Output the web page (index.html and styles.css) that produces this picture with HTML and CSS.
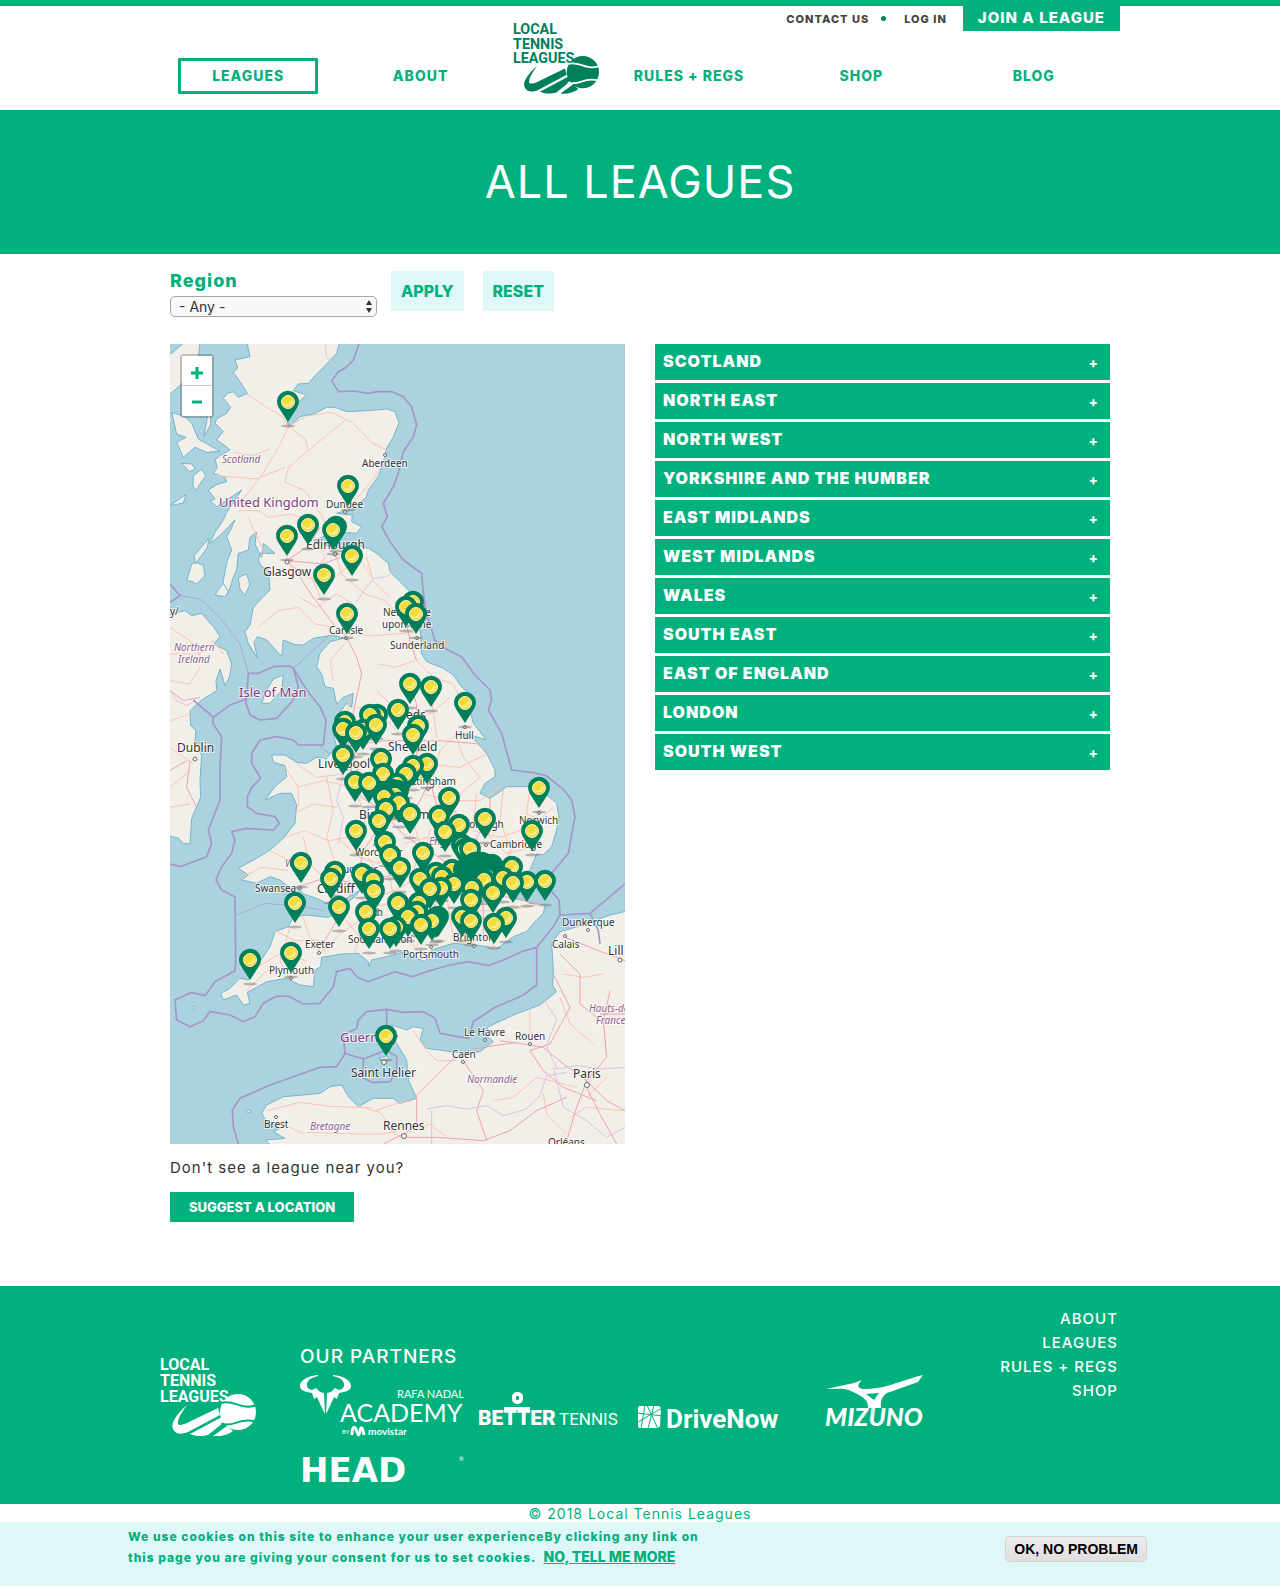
FILE: index.html
```html
<!DOCTYPE html>
<html lang="en">
<head>
<meta charset="utf-8">
<meta name="viewport" content="width=device-width, initial-scale=1">
<title>All Leagues | Local Tennis Leagues</title>
<link rel="stylesheet" href="styles.css">
</head>
<body>
<header class="header">
  <div class="wrap">
    <div class="top-links">
      <a href="#">Contact us</a>
      <span class="dot"></span>
      <a href="#">Log in</a>
      <a class="join" href="#">Join a league</a>
    </div>
    <nav class="nav">
      <a class="active" href="#">Leagues</a>
      <a href="#">About</a>
      <a class="logo" href="#" aria-label="Local Tennis Leagues">
        <svg viewBox="0 0 96 81">
          <g class="logo-words"><text x="0" y="15">LOCAL</text><text x="0" y="31">TENNIS</text><text x="0" y="47">LEAGUES</text></g>
          <use href="#swoosh"/>
        </svg>
      </a>
      <a href="#">Rules + Regs</a>
      <a href="#">Shop</a>
      <a href="#">Blog</a>
    </nav>
  </div>
</header>

<section class="hero"><h1>All Leagues</h1></section>

<main class="main">
  <form class="filters">
    <div class="field">
      <label for="region">Region</label>
      <div class="select">
        <select id="region"><option>- Any -</option><option>Scotland</option><option>North East</option><option>London</option></select>
        <svg viewBox="0 0 6 13"><path d="M0 5 3 0l3 5zM0 8l3 5 3-5z"/></svg>
      </div>
    </div>
    <button type="button">Apply</button>
    <button type="reset">Reset</button>
  </form>

  <div class="columns">
    <div>
      <div class="map">
        <svg class="map-art" viewBox="0 0 455 800" role="img" aria-label="Map of leagues">
          <defs>
            <g id="swoosh">
              <path d="M27 50C18 58 10 68 13 74c2 5 8 6 15 3l32-17-2-7-31 15c-5 2-9 3-9 0 0-5 4-11 9-18zM30 79c7 3 14 2 18 1l15-12-1-6zM53 81c7 1 15-1 20-5l-6-5z"/>
              <circle cx="78" cy="57" r="18"/>
              <path class="seam" d="M61 48c14-4 19 8 36 2M61 69c16 3 15-6 33-3"/>
            </g>
            <g id="pin-base">
              <ellipse class="pin-shadow" cy="24" rx="7" ry="1.5"/>
              <path class="pin-body" d="M0 20L-9 6A11 11 0 1 1 9 6z"/>
            </g>
            <g id="pin">
              <use href="#pin-base"/>
              <circle class="pin-ball" r="6.5"/>
              <path class="pin-seam" d="M-4.500 1.500C-3 5 3 4 3.500-2M-1 3.500c3 1 5-1 5.500-4"/>
            </g>
          </defs>
          <rect class="sea" width="455" height="800"/>
          <g transform="scale(.333333)">
            <g class="land">
              <path d="M230 -10L240 38 195 48 203 72 190 85 200 98 232 148 205 160 190 143 172 148 160 163 182 190 170 208 140 225 135 238 160 262 140 288 165 305 180 318 150 335 135 348 142 370 130 388 165 400 170 413 140 422 115 438 135 465 120 470 140 488 190 455 215 438 170 505 160 528 135 565 120 598 150 575 195 528 182 558 170 578 185 618 172 650 160 708 153 758 175 748 190 700 200 678 205 628 235 618 240 580 260 565 255 600 275 640 280 598 315 628 270 628 265 648 275 668 295 678 300 738 280 758 250 790 240 843 225 863 235 898 262 942 252 895 262 878 290 888 335 938 340 888 375 902 400 903 430 883 490 873 520 883 480 893 450 928 440 968 455 990 465 1028 490 1033 500 1080 520 1060 550 1048 545 1090 530 1078 500 1118 515 1150 490 1168 500 1208 470 1243 440 1240 410 1258 380 1255 345 1233 305 1233 310 1255 345 1265 350 1298 315 1328 285 1368 330 1348 365 1348 380 1383 375 1438 340 1483 300 1518 260 1543 205 1573 235 1593 215 1608 260 1618 300 1598 330 1608 360 1633 385 1633 400 1650 440 1663 470 1678 530 1663 570 1638 560 1653 530 1678 515 1710 470 1720 410 1713 370 1720 355 1748 315 1763 300 1808 260 1868 235 1908 210 1903 180 1933 152 1948 160 1968 200 1953 220 1983 240 1978 232 1945 290 1913 350 1903 390 1923 430 1928 435 1878 452 1868 455 1840 515 1830 565 1828 595 1853 597 1868 605 1848 650 1838 700 1825 730 1838 765 1853 785 1818 850 1798 910 1803 955 1808 975 1818 1030 1778 1070 1763 1090 1738 1120 1708 1125 1683 1080 1678 1060 1665 1020 1663 1010 1628 1045 1608 1080 1578 1100 1530 1120 1532 1145 1508 1160 1458 1167 1418 1160 1378 1120 1343 1080 1328 1010 1328 990 1343 960 1363 930 1348 945 1318 975 1298 975 1278 950 1228 915 1188 870 1168 920 1178 948 1188 930 1163 910 1138 898 1090 890 1043 870 1023 850 993 820 973 770 953 755 930 752 870 740 800 735 768 715 738 690 713 660 683 655 658 620 628 595 613 545 600 520 612 470 605 430 590 480 570 530 566 560 568 575 548 545 533 547 513 500 508 550 493 590 458 595 438 625 398 642 348 650 313 670 278 687 238 675 203 650 195 590 200 530 203 495 190 470 190 435 208 390 218 355 250 350 210 378 180 410 153 370 140 385 120 415 118 440 90 468 62 500 28 510 -10z"/>
              <path d="M-10 40L50 -10 90 -10 85 50 45 85 35 120 -10 160z"/>
              <path d="M5 205L45 218 65 238 85 285 150 322 110 325 75 310 40 340 20 295 48 280 20 270z"/>
              <path d="M35 358l30 2 12 15-18 8zM70 395l25-20 12 20-30 45-8-15zM0 485l48-34-8 26zM72 635l45-52-5 28-35 48zM50 710l15-50 15-5 20 10 5 30-25 25-15-8zM205 700l25-10 10 30-15 35-15-20zM112 218l10-20 0 45-20 35z"/>
              <path d="M150 730l10-12 15 25-10 15-30-5z"/>
              <path d="M-10 812L45 800 65 815 95 808 130 848 150 878 132 900 170 920 185 960 178 1000 165 1025 150 975 138 1010 140 1040 95 1068 60 1100 62 1145 78 1160 75 1188 95 1235 90 1310 92 1360 65 1423 60 1500 40 1498 25 1482 -10 1475z"/>
              <path d="M275 1078L285 1048 310 1005 340 993 335 1038 300 1078z"/>
              <path d="M1375 1700L1320 1713 1240 1743 1170 1763 1145 1798 1150 1880 1148 1925 1160 1943 1110 1983 1030 2013 955 2048 945 2073 970 2093 930 2123 880 2128 770 2113 750 2088 760 2053 730 2048 710 2058 665 2043 680 2098 710 2148 715 2208 740 2263 690 2278 670 2263 610 2263 565 2288 535 2258 515 2223 480 2228 450 2248 400 2253 340 2258 290 2283 275 2308 290 2333 340 2348 310 2363 345 2383 285 2388 310 2410 1375 2410z"/>
              <path d="M625 2142l25-5 10 10-20 5zM228 2300l10-2 6 5-10 4zM65 1990l6-4 4 8-8 3z"/>
            </g>
            <g class="road">
              <path d="M465 0l5 40 30 30M230 150l60 40 50 30 15 30-30 60-50 85-60 75M355 245l60-30 70-10 60 30 60 60 45 25M355 245l50 40 10 35 60-50 50-40M415 320l-60 50-10 45 60 25 40 60 30 50M345 370l-85 35-120-10M190 325l60 10 50-20M645 340l-30 60-60 70-40 30M205 500l60 0 30 20 70-10 60 25M235 520l50 110M350 640l40 50 45 20 60-10 70-60 40 60M435 590l30 50-40 60 30 70M495 630l20 60 70 60 60 20 60 70M590 640l20 70 50 50"/>
              <path d="M265 850l60-50 60-10 50 50 60 10M390 760l50 30 60-40 50 30M520 870l100 5 110-10M625 960l50 10 60-20M540 880l-60 70 10 60M700 770l30 100M740 950l50 50 60 20 30 60M620 1040l60 60 100 10 60-50M770 1000l20 100 10 80M560 1090l60 10 60 60M540 1060l-10 60 20 60M870 1160l-60 60-20 80M950 1230l-80 40-100-10M860 1180l20 60 50 60-60 50M380 1260l60 40 80-10M345 1270l40 60 0 60M370 1410l60-30 70 10M380 1330l80-20 90 20M345 1480l60-20 70 30 60-10M470 1300l20 100-20 80 30 90M400 1480l20 80 60 60M300 1520l60 30 40 60M215 1600l60-30 80 10M500 1480l70 60 60 20M550 1320l30 80 90 20M590 1400l-20 100 60 100"/>
              <path d="M760 1350l80 20 90 0 60-40M800 1310l40 80 70 70 80 20 90-30 70-60M920 1350l-10 90-40 60M1000 1335l-10 90 30 90-10 80M1080 1330l-10 80 70 30M860 1400l-80 60-20 80M700 1500l70-20 100 20 120 50M620 1550l80 40 110-20M720 1400l30 100-20 90M780 1400l50 100M930 1450l80 80 70-20M1010 1530l80-60M570 1640l80 10 80-40 80 30M560 1700l90-20 90 30 80-10 100 50M660 1600l20 120 60 100M780 1600l0 100-40 110M830 1650l20 140M900 1640l10 160M1000 1650l-40 70 10 90M900 1700l100 0 120-20M520 1720l50 60-20 50M400 1720l20 60 50 50M315 1760l60 30 70 0M260 1870l70-40 80 20M360 1750l-30 100 30 60M230 1940l60-60 80-10M450 1830l60-60 60-40"/>
              <path d="M0 930l90 0 40-40 30 40M0 850l60 40 40 60M0 1010l60 10 30-50M0 1130l60-20M0 1210l70 50M0 1330l60-50M0 1390l60-10"/>
              <path d="M290 2300l100-25 90 12 130 5M560 2285l70 20 40 60 30 20M615 2300l60-20 50-10M690 2360l-50 10-80 0-150-5M340 2340l60 30M730 2060l40 60 30 30 60 0M830 2380l-50-40-80 30M1080 2000l0 90M970 2270l60-10 70-60 120 30M1120 2250l10 60 60 60M1170 1960l30 80 70 60M1180 1890l60 10 60-10M1250 2260l60-60M1200 2320l50-30 110 10"/>
            </g>
            <g class="motorway">
              <path d="M350 650l60-40 40-60M350 650l110 10 50-20M350 650l40 50 40 60 60 80 40 40 30 60 15 50-20 90-20 120 10 90M550 1250l10-50 90-10 90 0 70 0 120 10M710 1000l30 80-5 100 10 80 30 60-30 60-80 40-90-60 -30-60-10-80M650 1420l60 60 80 50 80 50M550 1250l30 70 80 60M640 1430l-60 90-20 90-30 60-30 60-60 100M770 1260l20 90 30 90 60 80 20 40M910 1560l10-80 40-60 0-60M550 1610l150-20 120-10 70 0M380 1630l90-30 90 20M880 1580l-70 80-60 90-30 30M930 1620l10 80 0 80M930 1600l80 60 100 20M740 950l-20-60-10-50"/>
              <path d="M1170 1830l60 60 0 90 50 40 80-30M1365 1850l-80-30-100-40M1150 1890l50 100-60 110-60 20 40 60 60 50 100 40M1290 2010l75 0M990 2090l70 10 60 10 60 50 70 50M1250 2210l-30 80-30 100M1250 2210l60-70-10-110 20-90M1250 2210l60 60 55 30M1250 2230l40 80 50 90M850 2145l-60 60-50 50 0 80-30 30M850 2145l60-30 130-20M880 2150l60 90-20 60 30 90M710 2380l90 0 140 10 80-30 80-60 90-40M700 2370l-60 30M0 1040l40 30 50-10M60 1250l-10 80 30 60M0 1280l50-30"/>
            </g>
            <g class="region">
              <path d="M700 648l-50 50-40 5-30 40-20 30M510 1210l10 80-20 80 20 50-15 80M1120 1965l40 60-30 80 30 70 60-10 80 10 65-5M770 2295l60-10 60 10 60-10 50 30 70-20 40-40 20-60 60-10M785 2300l0 100M1150 2170l30 120 70 40 60 50 55-30M0 1040l20 30 30 15 25-15"/>
            </g>
            <g class="boundary">
              <path d="M567 0L550 48 525 73 505 83 485 110 505 143 550 141 595 148 620 143 667 143 700 158 725 188 740 243 730 278 700 323 685 388 670 428 640 478 652 518 635 548 660 593 700 648 755 688 760 748 768 800 795 890 830 916 875 938 915 993 960 1038 965 1068 955 1098 995 1168 1025 1278 1090 1286 1130 1296 1180 1336 1205 1368 1215 1418 1195 1528 1145 1588 1145 1643 1167 1668 1170 1713 1150 1748 1100 1810 1055 1823 1000 1848 955 1865 895 1853 840 1863 770 1883 725 1898 675 1883 635 1898 595 1913 560 1898 540 1873 500 1883 490 1928 450 1978 400 1980 355 1956 315 1958 280 1978 255 2018 220 2033 180 2013 120 2003 100 2030 60 2048 20 2028 15 1968 65 1945 105 1955 135 1913 195 1880 197 1850 195 1658 155 1638 138 1608 155 1568 185 1528 195 1488 185 1463 230 1453 310 1458 328 1438 315 1418 260 1408 232 1388 232 1358 245 1330 272 1303 245 1258 245 1228 270 1188 320 1178 370 1188 385 1203 460 1203 468 1128 450 1088 410 1038 370 973 360 966 310 968 265 988 235 988 228 1078 240 1113 270 1128 320 1123 370 1068 385 1028 370 973M228 1065L180 1083 130 1120 128 1138 155 1178 150 1278 150 1368 115 1458 125 1498 110 1538 30 1568 0 1560M70 1068L130 1120M1170 1713L1260 1708 1365 1620M1260 1708L1285 1760 1290 1800M1100 1808L1100 1923 1060 1953 970 1993 910 2033 895 2083 810 2068 795 2023 760 2003 700 2005 650 1996 590 2003 565 2028 560 2053 520 2073 525 2128 580 2145 650 2118 650 1996M525 2128L500 2168 450 2170 370 2198 300 2223 210 2263 187 2298 190 2348 205 2400M580 2145L580 2203 610 2216 660 2213 680 2178 680 2138 650 2118M0 720L30 755 0 775"/>
            </g>
            <path class="boundary thin" d="M30 755L90 765 150 820 210 900 235 988M370 973L480 873M195 1715L285 1678 400 1688 460 1700M450 1208L480 1230"/>
          </g>
          <g class="place">
            <circle cx="215" cy="111" r="1.500"/><circle cx="175" cy="168" r="1.500"/><circle cx="165" cy="210" r="2"/><circle cx="117" cy="218" r="2"/><circle cx="176" cy="294" r="1.500"/><circle cx="247" cy="294" r="1.500"/><circle cx="25" cy="415" r="2"/><circle cx="295" cy="383" r="1.500"/><circle cx="258" cy="445" r="1.500"/><circle cx="369" cy="469" r="1.500"/><circle cx="316" cy="501" r="1.500"/><circle cx="130" cy="544" r="1.500"/><circle cx="149" cy="609" r="1.500"/><circle cx="121" cy="634" r="1.500"/><circle cx="261" cy="603" r="1.500"/><circle cx="304" cy="602" r="1.500"/><circle cx="418" cy="586" r="1.500"/><circle cx="395" cy="592" r="1.500"/><circle cx="450" cy="616" r="2"/><circle cx="214" cy="718" r="2.500"/><circle cx="315" cy="696" r="1.500"/><circle cx="360" cy="700" r="1.500"/><circle cx="293" cy="718" r="1.500"/><circle cx="417" cy="741" r="2.500"/><circle cx="106" cy="773" r="1.500"/><circle cx="234" cy="792" r="2.500"/>
          </g>
          <g class="town">
            <text x="192" y="123">Aberdeen</text><text x="156" y="164">Dundee</text><text x="159" y="290">Carlisle</text><text x="213" y="272">Newcastle</text><text x="212" y="284">upon Tyne</text><text x="220" y="305">Sunderland</text><text x="285" y="395">Hull</text><text x="229" y="441">Nottingham</text><text x="268" y="484">Peterborough</text><text x="349" y="480">Norwich</text><text x="320" y="504">Cambridge</text><text x="185" y="512">Worcester</text><text x="157" y="529">Gloucester</text><text x="85" y="548">Swansea</text><text x="191" y="572">Bath</text><text x="178" y="599">Southampton</text><text x="283" y="597">Brighton</text><text x="135" y="604">Exeter</text><text x="233" y="614">Portsmouth</text><text x="99" y="630">Plymouth</text><text x="392" y="582">Dunkerque</text><text x="382" y="604">Calais</text><text x="294" y="692">Le Havre</text><text x="345" y="696">Rouen</text><text x="282" y="714">Caen</text><text x="94" y="784">Brest</text><text x="378" y="802">Orléans</text><text x="0" y="271">y/</text>
          </g>
          <g class="city">
            <text x="136" y="205">Edinburgh</text><text x="93" y="232">Glasgow</text><text x="223" y="375">Leeds</text><text x="218" y="407">Sheffield</text><text x="148" y="424">Liverpool</text><text x="7" y="408">Dublin</text><text x="189" y="475">Birmingham</text><text x="147" y="549">Cardiff</text><text x="438" y="611">Lill</text><text x="181" y="733">Saint Helier</text><text x="403" y="734">Paris</text><text x="213" y="786">Rennes</text>
          </g>
          <g class="area">
            <text x="52" y="119">Scotland</text><text x="4" y="307">Northern</text><text x="8" y="319">Ireland</text><text x="115" y="523">Wales</text><text x="259" y="501">England</text><text x="419" y="668">Hauts-de</text><text x="426" y="680">France</text><text x="297" y="739">Normandie</text><text x="140" y="786">Bretagne</text>
          </g>
          <g class="country">
            <text x="49" y="163">United Kingdom</text><text x="69" y="353">Isle of Man</text><text x="170" y="698">Guernsey</text>
          </g>
          <g id="pins"></g>
        </svg>
        <div class="zoom">
          <button type="button" aria-label="Zoom in"><svg viewBox="0 0 12 12"><path d="M6 0v12M0 6h12"/></svg></button>
          <button type="button" aria-label="Zoom out"><svg viewBox="0 0 12 12"><path d="M1 6h10"/></svg></button>
        </div>
      </div>
      <p class="prompt">Don't see a league near you?</p>
      <a class="suggest" href="#">Suggest a location</a>
    </div>

    <div class="accordion">
      <button type="button">Scotland<span>+</span></button>
      <button type="button">North East<span>+</span></button>
      <button type="button">North West<span>+</span></button>
      <button type="button">Yorkshire and the Humber<span>+</span></button>
      <button type="button">East Midlands<span>+</span></button>
      <button type="button">West Midlands<span>+</span></button>
      <button type="button">Wales<span>+</span></button>
      <button type="button">South East<span>+</span></button>
      <button type="button">East of England<span>+</span></button>
      <button type="button">London<span>+</span></button>
      <button type="button">South West<span>+</span></button>
    </div>
  </div>
</main>

<footer class="footer">
  <div class="wrap footer-row">
    <a class="footer-logo" href="#" aria-label="Local Tennis Leagues">
      <svg viewBox="0 0 96 81">
        <g class="logo-words"><text x="0" y="15">LOCAL</text><text x="0" y="31">TENNIS</text><text x="0" y="47">LEAGUES</text></g>
        <use href="#swoosh"/>
      </svg>
    </a>
    <section class="partners">
      <h2>Our Partners</h2>
      <div class="partner-grid">
        <svg viewBox="0 0 164 64" role="img" aria-label="Rafa Nadal Academy by Movistar">
          <path d="M18 1C8 2 0 6 0 12c0 4 5 6 12 7l2 6 3-2 4 9 4 8-1-21-4-1-4-4-4 2C7 15 5 11 9 6c2-2 5-3 9-4zM33 1c10 1 18 5 18 11 0 4-5 6-12 7l-2 6-3-2-4 9-4 8 1-21 4-1 4-4 4 2c5-1 7-5 3-10-2-2-5-3-9-4z"/>
          <text class="rafa" x="97" y="24">RAFA NADAL</text>
          <text class="academy" x="40" y="48">ACADEMY</text>
          <text class="by" x="42" y="60">BY</text>
          <path class="stroke" d="M52 61c0-9 3-10 5-3 2 5 2 3 3-1 1-6 3-3 4 4"/>
          <text class="movistar" x="68" y="61">movistar</text>
        </svg>
        <svg viewBox="0 0 164 64" role="img" aria-label="Better Tennis">
          <rect class="ring" x="46" y="20" width="7" height="8" rx="3"/>
          <path d="M36 33h26v3H36z"/>
          <text class="better" x="10" y="51">BETTER</text><text class="tennis" x="91" y="51">TENNIS</text>
        </svg>
        <svg viewBox="0 0 164 64" role="img" aria-label="DriveNow">
          <path d="M3 32h20l2 2-1 18-2 2H3l-1-2V34z"/>
          <path class="cut" d="M1 39l26 3M2 48l24-14M9 31l-4 24M11 31l11 24M18 31L12 55"/>
          <text class="drive" x="30" y="54">DriveNow</text>
        </svg>
        <svg viewBox="0 0 164 64" role="img" aria-label="Mizuno">
          <path d="M22 15L50 9l8-3c-4 4-6 8 1 9 23 0 33-7 60-14l-5 7-31 11c-5 3-7 8-6 15H64c1-10-9-13-19-18-7-2-15-1-23-1z"/>
          <path class="hole" d="M62 20l8 6 5-7z"/>
          <text class="mizuno" x="21" y="52">MIZUNO</text>
        </svg>
        <svg viewBox="0 0 164 32" role="img" aria-label="Head">
          <text class="head" x="0" y="28">HEAD</text><text class="by" x="159" y="7">®</text>
        </svg>
      </div>
    </section>
    <nav class="footer-nav">
      <a href="#">About</a><a href="#">Leagues</a><a href="#">Rules + Regs</a><a href="#">Shop</a>
    </nav>
  </div>
</footer>
<p class="copyright">© 2018 Local Tennis Leagues</p>

<aside class="cookies">
  <div class="cookie-row">
    <p>We use cookies on this site to enhance your user experienceBy clicking any link on this page you are giving your consent for us to set cookies. <a href="#">No, tell me more</a></p>
    <button type="button">OK, NO PROBLEM</button>
  </div>
</aside>
<script src="map.js"></script>
</body>
</html>
```
FILE: map.js
```js
// League locations in map units, drawn in order. A third value of 1 marks a plain pin.
const leagues = [
  [118,58],[178,142],[138,181],[117,192],[166,183,1],[163,186],[182,212],[154,231],[243,258],[236,263],[246,270],[177,270],
  [240,340],[261,343],[295,359],[228,366],[207,371],[200,371],[175,378],[173,385],[193,386],[206,381],[186,389],[248,382],[243,391],
  [211,415],[173,411],[257,420],[243,422],[236,430],[213,430],[185,438],[199,439],[227,440],[222,446,1],[228,447,1],[225,451],[214,453],
  [279,454],[229,459],[216,465],[240,470],[209,477],[269,472],[315,475],[369,444],[289,481],[275,488],[362,487],[186,487],
  [215,498],[220,511],[230,524],[253,509],[292,501],[295,505],[300,505],[131,519],[165,528],[161,535],
  [342,523],[282,526],[266,529],[272,533],[322,521,1],[318,521,1],[312,519,1],[305,519,1],[299,522,1],[294,526,1],[303,528,1],[310,526,1],
  [318,533],[314,536],[333,534],[250,535],[284,540],[271,544],[260,545],[302,544],[375,537],[357,538],[343,539],[323,549],[301,556],
  [192,530],[203,536],[204,547],[125,559],[169,563],[228,559],[249,559],[247,568],[238,573],[196,568],[268,573,1],[266,574,1],[262,577],
  [251,581],[226,583],[220,585],[199,585],[292,573],[301,577],[336,574],[324,580],[80,616],[121,609],[216,692]
];

const layer = document.getElementById("pins");
for (const [x, y, plain] of leagues) {
  const pin = document.createElementNS("http://www.w3.org/2000/svg", "use");
  pin.setAttribute("href", plain ? "#pin-base" : "#pin");
  pin.setAttribute("x", x);
  pin.setAttribute("y", y);
  layer.append(pin);
}
```
FILE: styles.css
```css
:root {
  --green: #00b07d;
  --dark: #007f5b;
  --mint: #e0f7f8;
}
* { box-sizing: border-box; }
body {
  margin: 0;
  background: #fff;
  color: #333;
  font-family: Inter, "Open Sans", sans-serif;
  font-size: 14px;
  letter-spacing: 1px;
}
a { color: inherit; text-decoration: none; }
button { font-family: inherit; cursor: pointer; }
p, h1, h2 { margin: 0; }
svg { display: block; }
.wrap { max-width: 960px; margin: 0 auto; }

.header { border-top: 6px solid var(--green); height: 110px; }
.top-links {
  display: flex;
  justify-content: flex-end;
  height: 25px;
  color: #444;
  font-size: 11px;
  font-weight: 800;
  line-height: 26px;
  text-transform: uppercase;
}
.dot {
  width: 5px;
  height: 5px;
  margin: 10px 18px 0 12px;
  border-radius: 50%;
  background: var(--dark);
}
.join {
  margin-left: 16px;
  padding: 0 15px;
  background: var(--green);
  color: #fff;
  font-size: 15px;
  font-weight: 800;
  line-height: 24px;
}
.nav {
  --gap: #fff;
  display: grid;
  grid-template-columns: 1fr 1fr 96px 1fr 1fr 1fr;
  align-items: end;
  height: 73px;
  margin-top: -10px;
  padding-left: 2px;
  color: var(--green);
  font-weight: 800;
  line-height: 30px;
  text-align: center;
  text-transform: uppercase;
}
.nav a { padding-bottom: 3px; }
.nav .active { margin: 0 16px; padding: 0; border: 3px solid var(--green); }
.nav .logo { width: 86px; margin-left: 6px; padding: 0; fill: var(--dark); }
.logo-words {
  font-family: Roboto, sans-serif;
  font-size: 16px;
  font-weight: 700;
  letter-spacing: 0;
}
.seam { fill: none; stroke: var(--gap); stroke-width: 2; }

.hero { padding: 44px 0; background: var(--green); color: #fff; text-align: center; }
.hero h1 { font-size: 45px; font-weight: 400; line-height: 56px; text-transform: uppercase; }

.main { max-width: 940px; margin: 0 auto; padding: 17px 0 64px; }
.filters { display: flex; align-items: flex-start; height: 73px; color: var(--green); }
.field { width: 207px; margin-right: 14px; }
.field label { display: block; font-size: 18px; font-weight: 800; line-height: 20px; margin-bottom: 5px; }
.select { position: relative; }
.select select {
  display: block;
  width: 100%;
  height: 21px;
  padding: 0 8px;
  border: 1px solid #a6a6a6;
  border-radius: 5px;
  background: #f8f8f8;
  color: #333;
  font: 14px/18px Inter, sans-serif;
  appearance: none;
}
.select svg { position: absolute; top: 4px; right: 5px; width: 6px; height: 13px; fill: #333; }
.filters button {
  height: 40px;
  margin-right: 19px;
  padding: 0 10px;
  border: 0;
  background: var(--mint);
  color: var(--green);
  font-size: 16px;
  font-weight: 800;
  text-transform: uppercase;
}

.columns { display: grid; grid-template-columns: 1fr 1fr; gap: 30px; align-items: start; }
.map { position: relative; overflow: hidden; }
.map-art { width: 100%; height: auto; }
.sea { fill: #aad3df; }
.land path { fill: #f2efe9; stroke: #72b5cc; stroke-width: 3; stroke-linejoin: round; }
.road, .motorway, .region, .boundary { fill: none; stroke-linejoin: round; }
.road { stroke: #fac3b2; stroke-width: 3; }
.motorway { stroke: #eea0b4; stroke-width: 3; }
.region { stroke: #dcc2dc; stroke-width: 3; }
.boundary { stroke: #a794c8; stroke-width: 5; }
.thin { stroke-width: 2; }
.place { fill: #fff; stroke: #666; }
.town, .city, .area, .country {
  font-family: "Noto Sans", sans-serif;
  letter-spacing: 0;
  fill: #333;
  stroke: #fff;
  stroke-width: 2px;
  stroke-opacity: .7;
  paint-order: stroke;
}
.town { font-size: 10px; }
.city { font-size: 12px; }
.area { font-size: 10px; font-style: italic; fill: #8d618b; }
.country { font-size: 13px; fill: #80407f; }
.pin-shadow { fill: #777; fill-opacity: .5; }
.pin-body { fill: var(--dark); }
.pin-ball { fill: #f3dc3c; stroke: #fdf5b8; }
.pin-seam { fill: none; stroke: #fff8c8; }
.zoom {
  position: absolute;
  top: 10px;
  left: 10px;
  width: 34px;
  border: 2px solid rgba(0, 0, 0, .2);
  border-radius: 4px;
  background-clip: padding-box;
}
.zoom button {
  display: flex;
  align-items: center;
  justify-content: center;
  width: 30px;
  height: 30px;
  padding: 2px 0 0;
  border: 0;
  background: #fff;
}
.zoom button:first-child { padding-top: 4px; border-bottom: 1px solid #ccc; }
.zoom svg { width: 12px; height: 12px; fill: none; stroke: var(--green); stroke-width: 3; }
.prompt { padding: 14px 0; line-height: 20px; font-size: 15px; }
.suggest {
  display: inline-block;
  padding: 0 19px;
  background: var(--green);
  color: #fff;
  font-size: 13px;
  font-weight: 800;
  letter-spacing: 0;
  line-height: 30px;
  text-transform: uppercase;
}
.accordion { display: grid; gap: 3px; }
.accordion button {
  display: flex;
  align-items: center;
  justify-content: space-between;
  height: 36px;
  padding: 0 11px 2px 8px;
  border: 0;
  background: var(--green);
  color: #fff;
  font-size: 16px;
  font-weight: 900;
  letter-spacing: 1px;
  text-transform: uppercase;
}
.accordion span { padding-top: 2px; font-size: 14px; font-weight: 700; }

.footer { --gap: var(--green); background: var(--green); color: #fff; }
.footer-row { display: flex; padding-bottom: 18px; }
.footer svg { fill: #fff; }
.footer-logo { width: 96px; margin: 69px 44px 0 0; }
.partners { flex: 1; padding-top: 58px; }
.partners h2 { height: 30px; font-size: 19px; font-weight: 500; line-height: 26px; text-transform: uppercase; }
.partner-grid { display: grid; grid-template-columns: repeat(4, 164px); gap: 16px 4px; letter-spacing: 0; }
.rafa { font: 400 11px Lato, sans-serif; }
.academy { font: 400 25px Lato, sans-serif; }
.by { font: 6px Lato, sans-serif; }
.movistar { font: 700 10px Lato, sans-serif; }
.stroke { fill: none; stroke: #fff; stroke-width: 3; }
.ring { fill: none; stroke: #fff; stroke-width: 4; }
.better { font: 900 21px Roboto, sans-serif; }
.tennis { font: 400 17px Roboto, sans-serif; }
.cut { fill: none; stroke: var(--green); stroke-width: 1; }
.drive { font: 700 26px Roboto, sans-serif; }
.hole { fill: var(--green); }
.mizuno { font: italic 900 25px Lato, sans-serif; }
.head { font: 700 34px "DejaVu Sans", sans-serif; }
.footer-nav {
  display: grid;
  align-content: start;
  justify-content: end;
  width: 0;
  padding: 21px 2px 0 0;
  font-size: 15px;
  font-weight: 500;
  line-height: 24px;
  text-align: right;
  text-transform: uppercase;
  white-space: nowrap;
}
.copyright { color: var(--green); line-height: 20px; height: 18px; text-align: center; }

.cookies { background: var(--mint); color: var(--green); }
.cookie-row {
  display: flex;
  align-items: flex-start;
  justify-content: space-between;
  max-width: 1024px;
  min-height: 64px;
  margin: 0 auto;
  padding: 5px 5px 0 0;
}
.cookie-row p { max-width: 590px; font-size: 12px; font-weight: 800; line-height: 20px; }
.cookie-row a { margin-left: 4px; font-size: 14px; letter-spacing: 0; text-decoration: underline; text-transform: uppercase; }
.cookie-row button {
  height: 26px;
  margin-top: 9px;
  padding: 0 8px;
  border: 1px solid #d2d2d2;
  border-radius: 5px;
  background: linear-gradient(#ededed, #dedede);
  color: #000;
  font: 700 14px "Liberation Sans", Arial, sans-serif;
}
```
